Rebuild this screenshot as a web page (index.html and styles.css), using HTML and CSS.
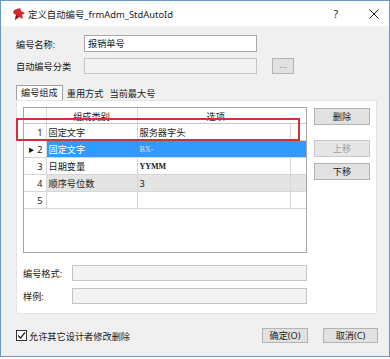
FILE: index.html
```html
<!DOCTYPE html>
<html lang="zh-CN">
<head>
    <meta charset="UTF-8">
    <title>定义自动编号</title>
    <link rel="stylesheet" href="styles.css">
</head>
<body>
<div class="window">
    <div class="titlebar">
        <svg class="appicon" width="14" height="14" viewBox="0 0 14 14">
            <path d="M2 3 L8 1 L9 4 L13 6 L10 8 L11 12 L7 10 L3 13 L4 8 L1 6 Z" fill="#d8262e"/>
            <path d="M4 8 L7 10 L3 13 Z" fill="#8a1016"/>
        </svg>
        <span class="title">定义自动编号_frmAdm_StdAutoId</span>
        <span class="help">?</span>
        <svg class="close" width="10" height="10" viewBox="0 0 10 10">
            <path d="M0.5 0.5 L9.5 9.5 M9.5 0.5 L0.5 9.5" stroke="#222" stroke-width="1"/>
        </svg>
    </div>

    <div class="content">
        <div class="row">
            <label class="lbl">编号名称:</label>
            <div class="input">报销单号</div>
        </div>
        <div class="row row2">
            <label class="lbl">自动编号分类</label>
            <div class="input disabled"></div>
            <div class="btn dots">...</div>
        </div>

        <div class="tabs">
            <div class="tab active">编号组成</div>
            <div class="tab">重用方式</div>
            <div class="tab">当前最大号</div>
        </div>

        <div class="panel">
            <div class="top">
                <div class="grid">
                    <table>
                        <colgroup>
                            <col class="w-rh">
                            <col class="w-c1">
                            <col class="w-c2">
                            <col>
                        </colgroup>
                        <tr class="head">
                            <th class="rh"></th>
                            <th class="c1">组成类别</th>
                            <th class="c2" colspan="2">选项</th>
                        </tr>
                        <tr>
                            <td class="rh">1</td>
                            <td>固定文字</td>
                            <td>服务器字头</td>
                            <td class="fill"></td>
                        </tr>
                        <tr class="sel">
                            <td class="rh"><span class="arrow">&#9654;</span>2</td>
                            <td>固定文字</td>
                            <td class="latin">BX-</td>
                            <td class="fill"></td>
                        </tr>
                        <tr>
                            <td class="rh">3</td>
                            <td>日期变量</td>
                            <td class="latin bold">YYMM</td>
                            <td class="fill"></td>
                        </tr>
                        <tr class="alt">
                            <td class="rh">4</td>
                            <td>顺序号位数</td>
                            <td>3</td>
                            <td class="fill"></td>
                        </tr>
                        <tr>
                            <td class="rh">5</td>
                            <td></td>
                            <td></td>
                            <td class="fill"></td>
                        </tr>
                    </table>
                </div>
                <div class="side">
                    <div class="btn b-del">删除</div>
                    <div class="btn b-up off">上移</div>
                    <div class="btn b-down">下移</div>
                </div>
            </div>
            <div class="field">
                <label class="flbl">编号格式:</label>
                <div class="input disabled wide"></div>
            </div>
            <div class="field f2">
                <label class="flbl">样例:</label>
                <div class="input disabled wide"></div>
            </div>
        </div>

        <div class="footer">
            <div class="check">
                <span class="box">
                    <svg width="9" height="9" viewBox="0 0 9 9">
                        <path d="M1 4.5 L3.5 7 L8 1.5" fill="none" stroke="#222" stroke-width="1.2"/>
                    </svg>
                </span>
                <span>允许其它设计者修改删除</span>
            </div>
            <div class="btn ok">确定(O)</div>
            <div class="btn cancel">取消(C)</div>
        </div>
    </div>

    <div class="mark"></div>
</div>
</body>
</html>
```

FILE: styles.css
```css
body {
    margin: 0;
    padding: 0;
    background-color: #fff;
    font-family: "Noto Sans", "Noto Sans CJK SC", sans-serif;
    font-size: 9.2px;
    color: #1a1a1a;
}

.window {
    position: relative;
    width: 390px;
    height: 357px;
    box-sizing: border-box;
    border: 1px solid #6d97c0;
    background-color: #f0f0f0;
    display: flex;
    flex-direction: column;
}

.titlebar {
    height: 25px;
    background-color: #fff;
    display: flex;
    align-items: center;
    padding-left: 11px;
}

.appicon {
    margin-right: 2px;
}

.title {
    font-size: 9.4px;
    color: #222;
}

.help {
    margin-left: auto;
    font-size: 10px;
    margin-right: 31px;
}

.close {
    margin-right: 10px;
}

.content {
    padding: 9px 11px 0 15px;
}

.row {
    display: flex;
    align-items: center;
    height: 17px;
}

.row2 {
    margin-top: 6px;
    height: 16px;
}

.lbl {
    width: 68px;
}

.input {
    width: 173px;
    height: 100%;
    box-sizing: border-box;
    border: 1px solid #a8a8a8;
    background-color: #fff;
    padding-left: 3px;
    line-height: 15px;
}

.input.disabled {
    background-color: #f3f3f3;
    border-color: #c4c4c4;
}

.btn {
    box-sizing: border-box;
    border: 1px solid #b4b4b4;
    background-color: #e1e1e1;
    text-align: center;
    height: 17px;
    line-height: 15px;
}

.dots {
    width: 22px;
    height: 16px;
    margin-left: 15px;
    color: #888;
    line-height: 12px;
}

.tabs {
    display: flex;
    align-items: flex-end;
    margin-top: 11px;
    height: 15px;
}

.tab {
    height: 13px;
    line-height: 13px;
    padding: 0 2px;
    margin-right: 2px;
}

.tab.active {
    height: 15px;
    line-height: 14px;
    box-sizing: border-box;
    border: 1px solid #a0a0a0;
    border-bottom: none;
    background-color: #fff;
    padding: 0 4px;
}

.panel {
    width: 361px;
    height: 214px;
    box-sizing: border-box;
    background-color: #fff;
    border: 1px solid #e4e4e4;
    padding: 6px 6px 0 6px;
}

.top {
    display: flex;
}

.grid {
    width: 284px;
    height: 146px;
    box-sizing: border-box;
    border: 1px solid #a6a6a6;
    background-color: #fff;
}

table {
    width: 100%;
    border-collapse: collapse;
    table-layout: fixed;
}

.w-rh {
    width: 22px;
}

.w-c1 {
    width: 91px;
}

.w-c2 {
    width: 153px;
}

th, td {
    height: 16px;
    padding: 0 2px;
    font-weight: normal;
    border-right: 1px solid #d6d6d6;
    border-bottom: 1px solid #d6d6d6;
    white-space: nowrap;
    overflow: hidden;
}

.head th {
    height: 15px;
    border-right: none;
    border-bottom: 1px solid #c8c8c8;
}

th.c2 {
    padding-right: 14px;
}

.rh {
    text-align: right;
    padding-right: 3px;
}

th.rh {
    border-right: 1px solid #d6d6d6;
}

th.c1 {
    border-right: 1px solid #d6d6d6;
}

td.fill {
    border-right: none;
}

.arrow {
    font-size: 6px;
    margin-right: 3px;
    vertical-align: 1px;
}

.sel td {
    background-color: #3399ff;
    color: #fff;
    border-right-color: #3399ff;
}

.sel td.rh {
    background-color: #fff;
    color: #1a1a1a;
    border-right-color: #d6d6d6;
}

.alt td {
    background-color: #e4e4e4;
}

.alt td.rh {
    background-color: #fff;
}

.latin {
    font-family: "Liberation Serif", serif;
    font-size: 8px;
}

.sel .latin {
    color: #f3dada;
}

.bold {
    font-weight: bold;
}

.side {
    margin-left: 7px;
    display: flex;
    flex-direction: column;
}

.side .btn {
    width: 56px;
}

.b-del {
    margin-top: 1px;
}

.b-up {
    margin-top: 15px;
}

.b-down {
    margin-top: 6px;
}

.btn.off {
    color: #a0a0a0;
    border-color: #c8c8c8;
    background-color: #e6e6e6;
}

.field {
    display: flex;
    align-items: center;
    height: 16px;
    margin-top: 12px;
}

.f2 {
    margin-top: 7px;
}

.flbl {
    width: 49px;
}

.input.wide {
    width: 235px;
}

.footer {
    display: flex;
    align-items: center;
    margin-top: 14px;
    height: 15px;
}

.check {
    display: flex;
    align-items: center;
    flex: 1;
}

.box {
    width: 11px;
    height: 11px;
    box-sizing: border-box;
    border: 1px solid #333;
    background-color: #fff;
    display: flex;
    align-items: center;
    justify-content: center;
    margin-right: 2px;
}

.ok {
    width: 46px;
    height: 15px;
    line-height: 13px;
}

.cancel {
    width: 55px;
    height: 15px;
    line-height: 13px;
    margin-left: 15px;
}

.mark {
    position: absolute;
    left: 15px;
    top: 117px;
    width: 284px;
    height: 23px;
    box-sizing: border-box;
    border: 2px solid #d32f3a;
}
```
